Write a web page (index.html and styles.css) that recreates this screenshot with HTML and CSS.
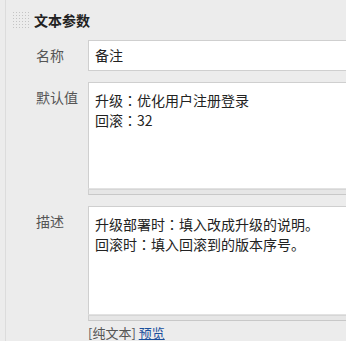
FILE: index.html
```html
<!DOCTYPE html>
<html lang="zh">
<head>
<meta charset="utf-8">
<link rel="stylesheet" href="styles.css">
</head>
<body>
<div class="panel">
  <div class="head">
    <span class="grip"></span>
    <span class="title">文本参数</span>
  </div>
  <div class="row">
    <div class="label name-label">名称</div>
    <div class="field input">备注</div>
  </div>
  <div class="row">
    <div class="label area-label">默认值</div>
    <div class="field">
      <div class="area area1">升级<span class="p" lang="zh-Hant">：</span>优化用户注册登录<br>回滚<span class="p" lang="zh-Hant">：</span>32</div>
      <div class="resize"></div>
    </div>
  </div>
  <div class="row">
    <div class="label area-label">描述</div>
    <div class="field">
      <div class="area area2">升级部署时<span class="p" lang="zh-Hant">：</span>填入改成升级的说明。<br>回滚时<span class="p" lang="zh-Hant">：</span>填入回滚到的版本序号。</div>
      <div class="resize"></div>
      <div class="foot">[纯文本] <a class="link" href="#">预览</a></div>
    </div>
  </div>
</div>
</body>
</html>
```

FILE: styles.css
```css
html, body {
  margin: 0;
  padding: 0;
  width: 346px;
  height: 341px;
  overflow: hidden;
  background: #ececec;
}
body {
  font-family: "Noto Sans CJK SC", "Microsoft YaHei", sans-serif;
  font-size: 14px;
  color: #222;
}
.panel {
  border-left: 1px solid #dcdcdc;
  margin-left: 5px;
  height: 341px;
  box-sizing: border-box;
}
.head {
  display: flex;
  align-items: center;
  height: 40px;
  padding-left: 6px;
}
.grip {
  width: 18px;
  height: 18px;
  margin-right: 4px;
  background-image: radial-gradient(circle, #c4c4c4 0.8px, transparent 1px);
  background-size: 3px 3px;
}
.title {
  font-weight: bold;
  font-size: 14px;
  color: #222;
  line-height: 16px;
}
.row {
  display: flex;
  margin-bottom: 11px;
}
.label {
  width: 52px;
  padding-left: 30px;
  color: #555;
  line-height: 18px;
  flex: none;
}
.name-label {
  padding-top: 6px;
}
.area-label {
  padding-top: 6px;
}
.field {
  flex: 1;
  min-width: 0;
}
.p {
  font-family: "Noto Sans CJK TC", sans-serif;
}
.input {
  height: 31px;
  box-sizing: border-box;
  background: #fff;
  border: 1px solid #cfcfcf;
  border-right: none;
  padding: 0 6px;
  line-height: 29px;
}
.area {
  background: #fff;
  border: 1px solid #cfcfcf;
  border-right: none;
  border-bottom: 1px solid #e2e2e2;
  padding: 7px 6px;
  line-height: 20px;
  box-sizing: border-box;
}
.area1 {
  height: 107px;
}
.area2 {
  height: 109px;
}
.resize {
  height: 4px;
  background: #e6e6e6;
  border-top: 1px solid #d6d6d6;
  border-bottom: 1px solid #c8c8c8;
  border-left: 1px solid #cfcfcf;
}
.foot {
  padding-top: 3px;
  color: #555;
  line-height: 18px;
  font-size: 13px;
}
.link {
  color: #1a4f9c;
  text-decoration: underline;
}
```
